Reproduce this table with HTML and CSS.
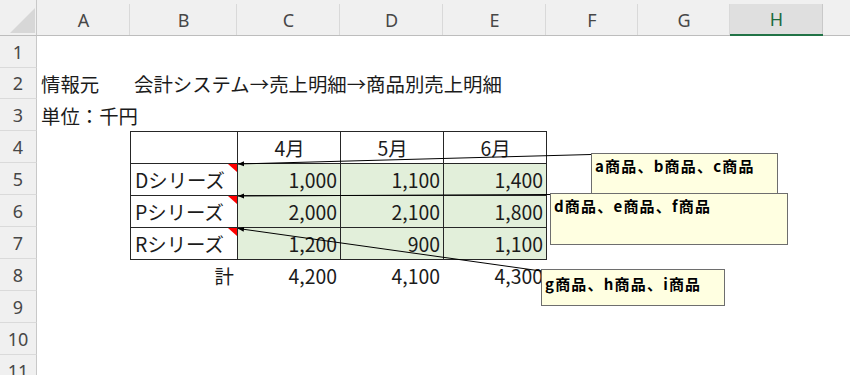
FILE: index.html
```html
<!DOCTYPE html>
<html lang="ja">
<head>
<meta charset="utf-8">
<title>売上明細</title>
<link rel="stylesheet" href="styles.css">
</head>
<body>
<div class="sheet">
  <div class="grid">
    <div class="corner"><svg width="37" height="36" viewBox="0 0 37 36"><polygon points="35,8 35,33 10,33" fill="#d7d7d7"/></svg></div>
    <div class="ch">A</div><div class="ch">B</div><div class="ch">C</div><div class="ch">D</div><div class="ch">E</div><div class="ch">F</div><div class="ch">G</div><div class="ch sel">H</div><div class="ch fill"></div>

    <div class="rh">1</div><div class="c"></div><div class="c"></div><div class="c"></div><div class="c"></div><div class="c"></div><div class="c"></div><div class="c"></div><div class="c"></div><div class="c"></div>

    <div class="rh">2</div><div class="c">情報元</div><div class="c">会計システム→売上明細→商品別売上明細</div><div class="c"></div><div class="c"></div><div class="c"></div><div class="c"></div><div class="c"></div><div class="c"></div><div class="c"></div>

    <div class="rh">3</div><div class="c">単位：千円</div><div class="c"></div><div class="c"></div><div class="c"></div><div class="c"></div><div class="c"></div><div class="c"></div><div class="c"></div><div class="c"></div>

    <div class="rh">4</div><div class="c"></div><div class="c t"></div><div class="c t m">4月</div><div class="c t m">5月</div><div class="c t m er">6月</div><div class="c"></div><div class="c"></div><div class="c"></div><div class="c"></div>

    <div class="rh">5</div><div class="c"></div><div class="c t ind">Dシリーズ</div><div class="c t g r">1,000</div><div class="c t g r">1,100</div><div class="c t g r er">1,400</div><div class="c"></div><div class="c"></div><div class="c"></div><div class="c"></div>

    <div class="rh">6</div><div class="c"></div><div class="c t ind">Pシリーズ</div><div class="c t g r">2,000</div><div class="c t g r">2,100</div><div class="c t g r er">1,800</div><div class="c"></div><div class="c"></div><div class="c"></div><div class="c"></div>

    <div class="rh">7</div><div class="c"></div><div class="c t ind lb">Rシリーズ</div><div class="c t g r lb">1,200</div><div class="c t g r lb">900</div><div class="c t g r er lb">1,100</div><div class="c"></div><div class="c"></div><div class="c"></div><div class="c"></div>

    <div class="rh">8</div><div class="c"></div><div class="c r">計</div><div class="c r">4,200</div><div class="c r">4,100</div><div class="c r">4,300</div><div class="c"></div><div class="c"></div><div class="c"></div><div class="c"></div>

    <div class="rh">9</div><div class="c"></div><div class="c"></div><div class="c"></div><div class="c"></div><div class="c"></div><div class="c"></div><div class="c"></div><div class="c"></div><div class="c"></div>

    <div class="rh">10</div><div class="c"></div><div class="c"></div><div class="c"></div><div class="c"></div><div class="c"></div><div class="c"></div><div class="c"></div><div class="c"></div><div class="c"></div>

    <div class="rh">11</div><div class="c"></div><div class="c"></div><div class="c"></div><div class="c"></div><div class="c"></div><div class="c"></div><div class="c"></div><div class="c"></div><div class="c"></div>
  </div>

  <svg class="arrows" width="850" height="375" viewBox="0 0 850 375">
    <defs>
      <marker id="ah" markerWidth="6" markerHeight="6" refX="6" refY="3" orient="auto-start-reverse" markerUnits="userSpaceOnUse">
        <path d="M0,0.5 L6,3 L0,5.5 z" fill="#000"/>
      </marker>
    </defs>
    <line x1="238" y1="164" x2="591" y2="154.5" marker-start="url(#ah)"/>
    <line x1="238" y1="196" x2="550" y2="194.5" marker-start="url(#ah)"/>
    <line x1="238" y1="228.5" x2="541" y2="271" marker-start="url(#ah)"/>
  </svg>

  <div class="note n1">a商品、b商品、c商品</div>
  <div class="note n2">d商品、e商品、f商品</div>
  <div class="note n3">g商品、h商品、i商品</div>
</div>
</body>
</html>
```

FILE: styles.css
```css
html, body {
  margin: 0;
  padding: 0;
}
body {
  width: 850px;
  height: 375px;
  overflow: hidden;
  background: #fff;
  font-family: "Noto Sans CJK JP", "Noto Sans", sans-serif;
  color: #1b1b1b;
}
.sheet {
  position: relative;
  width: 850px;
  height: 375px;
  overflow: hidden;
}
.grid {
  display: grid;
  grid-template-columns: 37px 93px 107px 103px 103px 103px 92px 92px 93px 1fr;
  grid-template-rows: 36px 32px 31px repeat(9, 32px);
}
.corner {
  background: #f0f0f0;
  border-right: 1px solid #c8c8c8;
  border-bottom: 1px solid #bdbdbd;
  box-sizing: border-box;
  overflow: hidden;
}
.corner svg {
  display: block;
}
.ch {
  background: linear-gradient(#d9d9d9, #d9d9d9) right 4px / 1px calc(100% - 4px) no-repeat, #f0f0f0;
  border-bottom: 1px solid #bdbdbd;
  box-sizing: border-box;
  padding-top: 4px;
  font-family: "Noto Sans", sans-serif;
  font-size: 18px;
  color: #474747;
  display: flex;
  align-items: center;
  justify-content: center;
}
.ch.sel {
  background: linear-gradient(#c9c9c9, #c9c9c9) right 4px / 1px calc(100% - 4px) no-repeat,
              linear-gradient(#dfdfdf, #dfdfdf) 0 4px / 100% 100% no-repeat, #f0f0f0;
  border-bottom: 2px solid #217346;
  color: #1c6b3f;
}
.ch.fill {
  background: #f0f0f0;
}
.rh {
  background: #f0f0f0;
  border-right: 1px solid #c8c8c8;
  border-bottom: 1px solid #dadada;
  box-sizing: border-box;
  font-family: "Noto Sans", sans-serif;
  font-size: 18px;
  color: #474747;
  display: flex;
  align-items: center;
  justify-content: center;
}
.c {
  font-size: 19.4px;
  display: flex;
  align-items: center;
  padding: 0 3px 0 4px;
  white-space: nowrap;
  box-sizing: border-box;
  min-width: 0;
}
.c.r {
  justify-content: flex-end;
}
.c.m {
  justify-content: center;
}
.t {
  border-left: 1px solid #262626;
  border-top: 1px solid #262626;
}
.g {
  background: #e2efda;
}
.er {
  box-shadow: 1px 0 0 #262626;
}
.lb {
  box-shadow: 0 1px 0 #262626;
}
.er.lb {
  box-shadow: 1px 0 0 #262626, 0 1px 0 #262626, 1px 1px 0 #262626;
}
.ind {
  position: relative;
}
.ind::after {
  content: "";
  position: absolute;
  top: 0;
  right: 0;
  width: 0;
  height: 0;
  border-left: 9px solid transparent;
  border-top: 8px solid #ff0000;
}
.arrows {
  position: absolute;
  left: 0;
  top: 0;
  pointer-events: none;
}
.arrows line {
  stroke: #000;
  stroke-width: 1;
}
.note {
  position: absolute;
  background: #ffffe1;
  border: 1px solid #6e6e6e;
  box-sizing: border-box;
  padding: 3px 3px;
  font-family: "Noto Sans CJK JP", sans-serif;
  font-weight: 700;
  font-size: 15px;
  line-height: 18px;
  letter-spacing: 1.2px;
  color: #000;
  white-space: nowrap;
}
.n1 {
  left: 591px;
  top: 153px;
  width: 187px;
  height: 48px;
}
.n2 {
  left: 550px;
  top: 193px;
  width: 238px;
  height: 52px;
}
.n3 {
  left: 541px;
  top: 269px;
  width: 184px;
  height: 37px;
  padding-top: 5px;
}
```
